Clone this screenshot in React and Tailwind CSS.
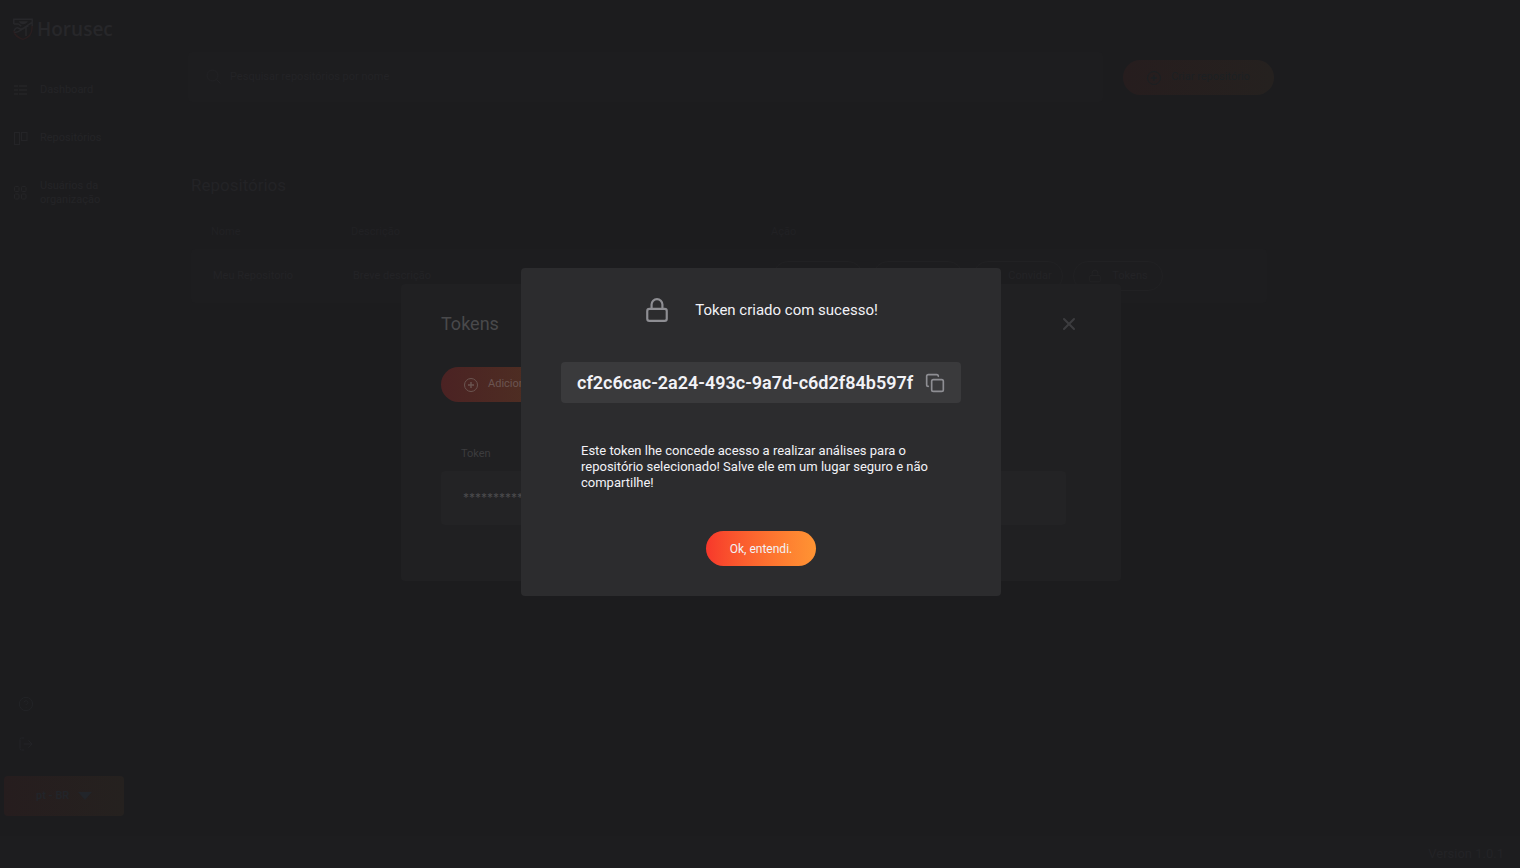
import { Copy, Lock, LogOut, CircleHelp, Pencil, Trash2, UserPlus, X } from "lucide-react";

function PlusCircle({ className }) {
  return (
    <svg viewBox="0 0 14 14" className={className} fill="none" stroke="currentColor" aria-hidden="true">
      <circle cx="7" cy="7" r="6.5" />
      <path d="M7 4v6M4 7h6" strokeWidth="1.400" />
    </svg>
  );
}

function Logo() {
  return (
    <a href="#home" className="flex items-center gap-1 text-[#27272a]">
      <svg viewBox="0 0 20 22" className="h-[22px] w-5" fill="none" aria-hidden="true">
        <path d="M.8 13c.8 4 4 6.800 9.200 8.300c5.200-1.500 9-5.300 9-11.300V8" stroke="#2a1e1f" strokeWidth="1.400" />
        <path d="M.8 6V1.200h18.400V8M.8 6h4.500l3 2.200M7 4c1 2 5 2 6.500 0zM1 13c1-3 3-4 5-2.500c2 1 3 .5 4.500-.5L19 4.500M1.500 14.500c4 0 5-1.500 8-3.500l6-3.500M13 9v9" stroke="currentColor" strokeWidth="1.500" />
      </svg>
      <span className="font-['Open_Sans',sans-serif] text-[19px] leading-6 font-semibold">Horusec</span>
    </a>
  );
}

function DashboardIcon() {
  return (
    <svg viewBox="0 0 14 10" className="h-2.5 w-3.5" stroke="currentColor" strokeWidth="1.300" aria-hidden="true">
      <path d="M0 1h4M5 1h8M0 5h4M5 5h8M0 9h4M5 9h8" />
    </svg>
  );
}

function BoardIcon() {
  return (
    <svg viewBox="0 0 14 14" className="size-3.5" fill="none" stroke="currentColor" aria-hidden="true">
      <rect x=".5" y="1.500" width="5" height="12" />
      <rect x="7.500" y="1.500" width="5.500" height="8" />
    </svg>
  );
}

function GridIcon() {
  return (
    <svg viewBox="0 0 14 14" className="size-3.5" fill="none" stroke="currentColor" aria-hidden="true">
      <rect x=".5" y=".5" width="4.500" height="5" rx="1" />
      <rect x="7.500" y=".5" width="4.500" height="5" rx="1" />
      <rect x=".5" y="8" width="4.500" height="5" rx="1" />
      <rect x="7.500" y="8" width="4.500" height="5" rx="1" />
    </svg>
  );
}

function SearchIcon() {
  return (
    <svg viewBox="0 0 16 16" className="size-4 text-[#222225]" fill="none" stroke="currentColor" aria-hidden="true">
      <circle cx="6.500" cy="6.500" r="5.500" />
      <path d="M10.500 10.500l4 4" />
    </svg>
  );
}

function Sidebar() {
  return (
    <aside className="flex w-[130px] shrink-0 flex-col text-[#242427]">
      <div className="pt-[17px] pl-[13px]">
        <Logo />
      </div>
      <nav className="mt-[34px] flex flex-col pl-3.5 text-[11px] leading-[14px]">
        <a href="#dashboard" className="flex h-[30px] items-center gap-3"><DashboardIcon />Dashboard</a>
        <a href="#repositorios" className="mt-[18px] flex h-[30px] items-center gap-3"><BoardIcon />Repositórios</a>
        <a href="#usuarios" className="mt-[25px] flex h-[30px] items-center gap-3"><GridIcon /><span>Usuários da<br />organização</span></a>
      </nav>
      <div className="mt-auto flex flex-col items-start pb-5 pl-1">
        <button type="button" aria-label="Ajuda" className="ml-3.5 text-[#222326]"><CircleHelp size={16} strokeWidth={1.5} /></button>
        <button type="button" aria-label="Sair" className="mt-6 ml-3.5 text-[#222326]"><LogOut size={16} strokeWidth={1.5} /></button>
        <div className="relative mt-6">
          <select aria-label="Idioma" className="h-10 w-[120px] appearance-none rounded-sm bg-linear-to-r from-[#261d1e] to-[#25211f] pl-8 text-[11px] font-semibold text-[#22252a]">
            <option>pt - BR</option>
          </select>
          <svg viewBox="0 0 14 8" className="pointer-events-none absolute top-4 right-8 h-2 w-3.5 fill-[#22252a]" aria-hidden="true"><path d="M0 0h14L7 8z" /></svg>
        </div>
      </div>
    </aside>
  );
}

function RowAction({ icon: Icon, children }) {
  return (
    <button type="button" className="flex h-[30px] w-[90px] items-center justify-center gap-2.5 rounded-full border border-[#212123]">
      <Icon size={14} strokeWidth={1.5} />
      {children}
    </button>
  );
}

function Repositories() {
  return (
    <main className="mr-auto ml-[58px] w-full max-w-[1086px] pt-[52px] text-[#232326]">
      <div className="flex items-start gap-5">
        <label className="flex h-[50px] flex-1 items-center gap-2 rounded-sm bg-[#1d1d1f] pl-[18px]">
          <SearchIcon />
          <input aria-label="Pesquisar repositórios por nome" placeholder="Pesquisar repositórios por nome" className="flex-1 bg-transparent text-[11px] placeholder:text-[#232326]" />
        </label>
        <button type="button" className="mt-2 flex h-[35px] w-[151px] items-center justify-center gap-2.5 rounded-full bg-linear-to-r from-[#261d1e] to-[#25211f] text-[11px] text-[#1c2023]">
          <PlusCircle className="size-3.5" />
          Criar repositório
        </button>
      </div>
      <h1 className="mt-[71px] ml-[3px] text-[17px] leading-6">Repositórios</h1>
      <table className="mt-6 ml-[3px] w-[1076px] table-fixed border-separate border-spacing-0 text-left text-[11px]">
        <colgroup>
          <col className="w-[140px]" />
          <col className="w-[420px]" />
          <col />
        </colgroup>
        <thead className="text-[#212124]">
          <tr className="h-7">
            <th className="pb-1.5 pl-5 font-normal">Nome</th>
            <th className="pb-1.5 pl-5 font-normal">Descrição</th>
            <th className="pb-1.5 pl-5 font-normal">Ação</th>
          </tr>
        </thead>
        <tbody>
          <tr className="h-[54px] bg-[#1d1d1f]">
            <td className="rounded-l-sm pl-[22px]">Meu Repositorio</td>
            <td className="pl-[22px]">Breve descrição</td>
            <td className="rounded-r-sm pl-[22px]">
              <div className="flex gap-2.5">
                <RowAction icon={Pencil}>Editar</RowAction>
                <RowAction icon={Trash2}>Deletar</RowAction>
                <RowAction icon={UserPlus}>Convidar</RowAction>
                <RowAction icon={Lock}>Tokens</RowAction>
              </div>
            </td>
          </tr>
        </tbody>
      </table>
    </main>
  );
}

function TokensDialog() {
  return (
    <div className="fixed inset-0 flex items-center justify-center pb-[3px] pl-0.5">
      <section role="dialog" aria-label="Tokens" className="flex w-[720px] flex-col items-start rounded-sm bg-[#202022] px-10 pt-7 pb-14 text-[#3c3c3e]">
        <header className="flex w-full items-center justify-between pr-0.5">
          <h2 className="text-lg leading-6 text-[#49494b]">Tokens</h2>
          <button type="button" aria-label="Fechar" className="text-[#3c3c3f]"><X size={20} strokeWidth={2.5} /></button>
        </header>
        <button type="button" className="mt-[31px] flex h-[35px] w-[130px] items-center gap-2.5 rounded-full bg-linear-to-r from-[#4b2223] to-[#4f3322] pl-[23px] text-[11px] text-[#6b5551]">
          <PlusCircle className="size-3.5" />
          Adicionar
        </button>
        <table className="mt-11 w-[625px] border-separate border-spacing-0 text-left text-[11px]">
          <thead>
            <tr className="h-[25px]"><th className="pb-2 pl-5 font-normal">Token</th></tr>
          </thead>
          <tbody>
            <tr className="h-[54px] bg-[#232325]"><td className="rounded-sm pl-[22px] font-['Inter',sans-serif] text-xs text-[#4b4b4d]">***********************</td></tr>
          </tbody>
        </table>
      </section>
    </div>
  );
}

function SuccessDialog() {
  return (
    <div className="fixed inset-0 flex items-center justify-center pb-1 pl-0.5">
      <section role="dialog" aria-modal="true" aria-labelledby="success-title" className="flex w-[480px] flex-col items-center rounded-sm bg-[#2c2c2e] px-10 py-[30px] text-[#f2f2f7]">
        <header className="flex h-6 items-center gap-[25px]">
          <Lock size={26} className="text-[#8e8e93]" />
          <h2 id="success-title" className="text-[15px] leading-6">Token criado com sucesso!</h2>
        </header>
        <div className="mt-10 flex h-[41px] w-full items-center justify-between rounded-sm bg-[#3a3a3c] px-4">
          <code className="font-['Roboto',sans-serif] text-lg font-semibold whitespace-nowrap">cf2c6cac-2a24-493c-9a7d-c6d2f84b597f</code>
          <button type="button" aria-label="Copiar token" className="text-[#8e8e93]"><Copy size={20} /></button>
        </div>
        <p className="mt-10 w-full px-5 text-[13px] leading-4">
          Este token lhe concede acesso a realizar análises para o repositório selecionado! Salve ele em um lugar seguro e não compartilhe!
        </p>
        <button type="button" className="mt-10 h-[35px] w-[110px] rounded-full bg-linear-to-r from-[#f7372b] to-[#ff9433] text-xs">Ok, entendi.</button>
      </section>
    </div>
  );
}

export default function App() {
  return (
    <div className="flex min-h-screen flex-col bg-[#1c1c1e] font-['Roboto',sans-serif]">
      <div className="flex flex-1">
        <Sidebar />
        <Repositories />
      </div>
      <footer className="flex h-8 items-center justify-end bg-[#1d1d1f] pt-1 pr-4 text-[13px] text-[#232326]">Version 1.0.1</footer>
      <TokensDialog />
      <SuccessDialog />
    </div>
  );
}
